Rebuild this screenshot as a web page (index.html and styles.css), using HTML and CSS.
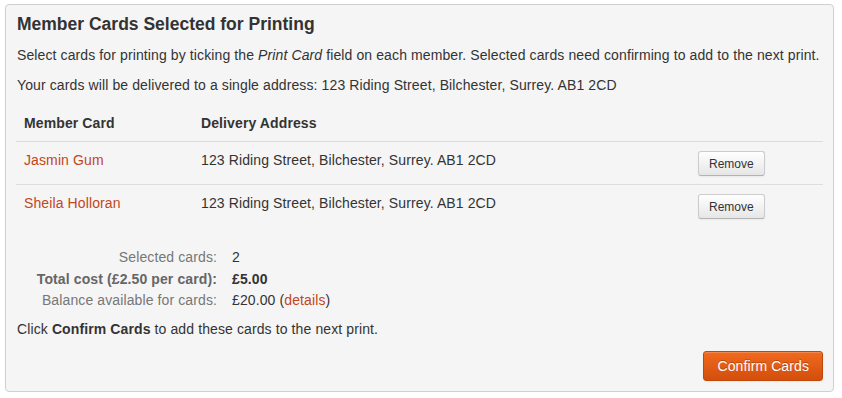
FILE: index.html
```html
<!DOCTYPE html>
<html>
<head>
<meta charset="utf-8">
<link rel="stylesheet" href="styles.css">
</head>
<body>
<div class="panel">
  <h4 class="title">Member Cards Selected for Printing</h4>
  <p class="text">Select cards for printing by ticking the <em>Print Card</em> field on each member. Selected cards need confirming to add to the next print.</p>
  <p class="text">Your cards will be delivered to a single address: 123 Riding Street, Bilchester, Surrey. AB1 2CD</p>
  <table class="cards">
    <thead>
      <tr><th class="col-name">Member Card</th><th>Delivery Address</th><th class="col-action"></th></tr>
    </thead>
    <tbody>
      <tr><td><a class="link" href="#">Jasmin Gum</a></td><td>123 Riding Street, Bilchester, Surrey. AB1 2CD</td><td><button class="btn-small">Remove</button></td></tr>
      <tr><td><a class="link" href="#">Sheila Holloran</a></td><td>123 Riding Street, Bilchester, Surrey. AB1 2CD</td><td><button class="btn-small">Remove</button></td></tr>
    </tbody>
  </table>
  <dl class="summary">
    <dt>Selected cards:</dt><dd>2</dd>
    <dt class="strong">Total cost (£2.50 per card):</dt><dd class="strong">£5.00</dd>
    <dt>Balance available for cards:</dt><dd>£20.00 (<a class="link" href="#">details</a>)</dd>
  </dl>
  <p class="text">Click <strong>Confirm Cards</strong> to add these cards to the next print.</p>
  <div class="actions"><button class="btn-primary">Confirm Cards</button></div>
</div>
</body>
</html>
```
FILE: styles.css
```css
html, body { margin: 0; padding: 0; background: #fff; }
body {
  padding: 4px 0 0 5px;
  font-family: "Liberation Sans", Arial, sans-serif;
  font-size: 14px;
  line-height: 20px;
  color: #333;
  letter-spacing: 0.11px;
}
.panel {
  width: 806px;
  box-sizing: content-box;
  border: 1px solid #cfcfcf;
  border-radius: 4px;
  background: #f5f5f5;
  padding: 9px 10px 10px 11px;
}
.title {
  margin: 0 0 11px 0;
  font-size: 17.5px;
  line-height: 20px;
  font-weight: bold;
  color: #333;
  letter-spacing: 0;
}
.text { margin: 0 0 10px 0; }
.cards {
  width: 807px;
  margin-left: -1px;
  border-collapse: collapse;
  border-spacing: 0;
}
.cards th, .cards td {
  padding: 8px;
  text-align: left;
  vertical-align: top;
  line-height: 20px;
}
.cards th { font-weight: bold; }
.cards tbody td { border-top: 1px solid #dddddd; }
.col-name { width: 161px; }
.col-action { width: 116px; }
.link { color: #c2461b; text-decoration: none; }
.btn-small {
  display: inline-block;
  height: 25px;
  padding: 0 10px;
  margin: 1px 0 0 -1px;
  font-family: "Liberation Sans", Arial, sans-serif;
  font-size: 12px;
  letter-spacing: 0;
  color: #333;
  background: linear-gradient(#ffffff, #e6e6e6);
  border: 1px solid #cccccc;
  border-bottom-color: #b3b3b3;
  border-radius: 3px;
  box-shadow: inset 0 1px 0 rgba(255,255,255,.2), 0 1px 2px rgba(0,0,0,.05);
}
.summary {
  display: grid;
  grid-template-columns: 200px auto;
  column-gap: 15px;
  margin: 20px 0 7px 0;
  line-height: 21.5px;
}
.summary dt { text-align: right; color: #777; margin: 0; }
.summary dd { margin: 0; color: #333; }
.summary .strong { font-weight: bold; }
.summary dt.strong { color: #666; }
.actions { display: flex; justify-content: flex-end; margin-top: 12px; }
.btn-primary {
  height: 30px;
  padding: 0 13px;
  font-family: "Liberation Sans", Arial, sans-serif;
  font-size: 14px;
  letter-spacing: 0.1px;
  color: #fff;
  text-shadow: 0 -1px 0 rgba(0,0,0,.25);
  background: linear-gradient(#f06a1f, #d24e0b);
  border: 1px solid #c0480b;
  border-radius: 3px;
  box-shadow: inset 0 1px 0 rgba(255,255,255,.2), 0 1px 2px rgba(0,0,0,.05);
}
```
